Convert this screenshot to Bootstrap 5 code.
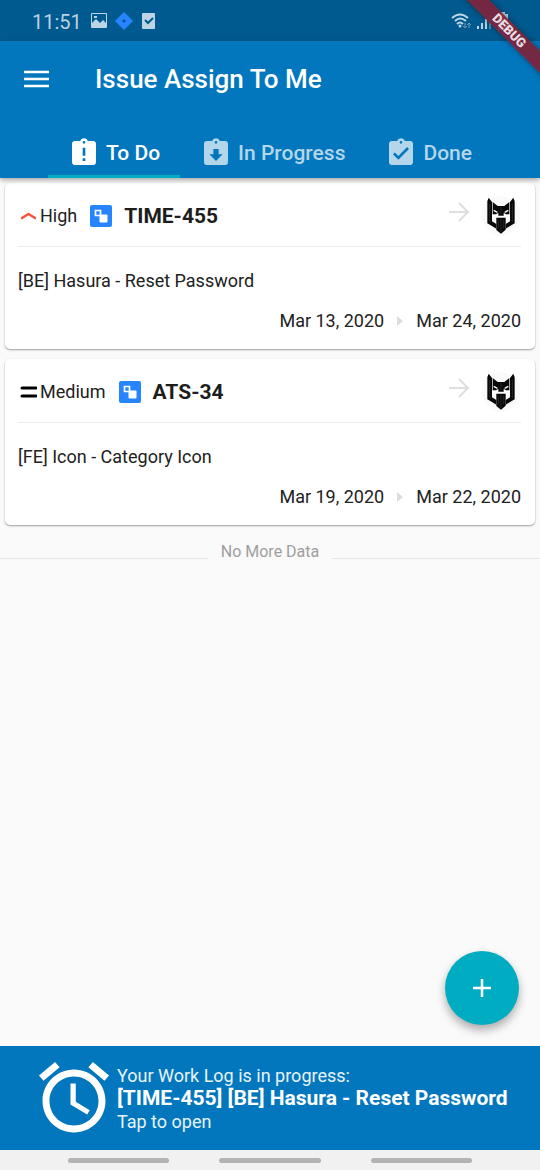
<!DOCTYPE html>
<html lang="en">
<head>
<meta charset="utf-8">
<meta name="viewport" content="width=device-width, initial-scale=1">
<title>Issue Assign To Me</title>
<link href="https://cdn.jsdelivr.net/npm/bootstrap@5.3.0/dist/css/bootstrap.min.css" rel="stylesheet">
<style>
  body { font-family: Roboto, "Noto Sans", sans-serif; font-size: 18px; line-height: 24px; color: #212121; background: #fafafa; }
  svg { display: block; flex-shrink: 0; }
  .screen { overflow-x: hidden; }
  .status-bar { height: 41px; background: #005a8f; color: #b9d2e2; font-size: 20px; padding: 2px 32px 0; }
  .status-icons { margin-left: 6px; }
  .top-bar { background: #0277bd; box-shadow: 0 2px 5px rgba(0,0,0,.35); z-index: 2; }
  .title-row { height: 76px; padding-left: 24px; gap: 46px; }
  .title-row h1 { font-size: 26px; line-height: 32px; font-weight: 500; }
  .menu-btn { border: 0; background: none; padding: 0; color: #fff; }
  .issue-tabs { height: 61px; }
  .issue-tabs .nav-link { color: #b3d6eb; font-size: 21px; font-weight: 500; padding: 14px 20px 0; gap: 6px; border-bottom: 3px solid transparent; }
  .issue-tabs .nav-link.active { color: #fff; border-color: #00acc1; }
  .debug-ribbon { top: 23px; right: -49px; width: 160px; height: 16px; line-height: 16px; transform: rotate(45deg); background: rgba(125,35,58,.92); color: #e9dde1; font-size: 13px; font-weight: 900; text-align: center; box-shadow: 0 0 6px rgba(0,0,0,.4); z-index: 5; }
  .issue-list { padding: 5px; gap: 10px; }
  .issue-card { border: 0; border-radius: 5px; padding: 0 14px 16px 13px; box-shadow: 0 1px 2px rgba(0,0,0,.38); }
  .issue-head { height: 64px; padding-top: 2px; border-bottom: 1px solid #ececec; }
  .issue-head h2 { font-size: 21px; line-height: 24px; font-weight: 700; margin: 0 0 0 12px; color: #1d1d1d; }
  .priority { gap: 3px; margin: 0 13px 0 2px; }
  .avatar-pic { margin-left: 11px; }
  .issue-text { margin: 22px 0 16px; }
  .issue-dates { gap: 12px; }
  .list-end { color: #9e9e9e; font-size: 16px; gap: 13px; margin-top: 10px; }
  .list-end hr { margin: 12px 0 0; border-color: #bdbdbd; opacity: .35; }
  .add-btn { width: 74px; height: 74px; right: 21px; bottom: 21px; border: 0; background: #00acc1; color: #fff; box-shadow: 0 5px 10px rgba(0,0,0,.32); }
  .work-log { background: #0277bd; color: #e8f4fb; text-decoration: none; padding: 14px 30px 14px 32px; gap: 1px; line-height: 23px; }
  .work-log:hover { color: #fff; }
  .work-log strong { font-size: 21px; color: #fff; }
  .gesture-bar { height: 20px; background: #f1f1f1; padding: 0 68px; gap: 50px; }
  .gesture-bar span { height: 5px; border-radius: 3px; background: #b3b3b3; }
</style>
</head>
<body>
<svg class="d-none" aria-hidden="true">
  <symbol id="subtask" viewBox="0 0 22 22">
    <rect width="22" height="22" rx="2" fill="#2684ff"/>
    <path d="M5.500 5.500h5v5h-5z" fill="none" stroke="#fff" stroke-width="1.700"/>
    <rect x="9.500" y="9.500" width="8" height="8" rx="1" fill="#fff"/>
  </symbol>
  <symbol id="arrow" viewBox="0 0 22 22">
    <path d="M1 11h19M11 2l9 9-9 9" fill="none" stroke="#dedede" stroke-width="2"/>
  </symbol>
  <symbol id="mask" viewBox="0 0 120 120">
    <circle cx="60" cy="60" r="59" fill="#fafafa"/>
    <g fill="#080808">
      <path d="M23 5l10 13v58l13 8v14L19 82V16z"/>
      <path d="M97 5L87 18v58l-13 8v14l27-16V16z"/>
      <path d="M35 18l15 12h20l15-12v37H75l-7-5v9H52v-9l-7 5H35z"/>
      <path d="M46 65h28v36L60 113 46 102z"/>
    </g>
    <path d="M46 20l14 9 14-9z" fill="#fafafa"/>
    <path d="M60 33v22M60 69v39M52 71v26M68 71v26M26 24v53M94 24v53" stroke="#444" stroke-width="1.500"/>
    <path d="M38 43l11 6M82 43l-11 6" stroke="#fafafa" stroke-width="4"/>
  </symbol>
</svg>

<div class="screen position-relative d-flex flex-column min-vh-100">
  <div class="debug-ribbon position-absolute">DEBUG</div>

  <div class="status-bar d-flex align-items-center">
    <span>11:51</span>
    <svg class="status-icons" width="70" height="20" viewBox="0 0 70 20" aria-hidden="true">
      <path fill="#bcd4e3" fill-rule="evenodd" d="M4 1h14q1 0 1 1v13q0 1-1 1H4q-1 0-1-1V2q0-1 1-1zm0 1v9l4-4 4 4 3-3 3 3V2zm2 2h3v2H6z"/>
      <path fill="#2684ff" d="M36 0l9 9-9 9-9-9z"/><path fill="#07509c" d="M36 7l2 2-2 2-2-2z"/>
      <path fill="#bcd4e3" d="M55 1h11q1 0 1 1v14q0 1-1 1H55q-1 0-1-1V2q0-1 1-1z"/>
      <path d="M57 8l3 3 5-5" fill="none" stroke="#005a8f" stroke-width="2"/>
    </svg>
    <svg class="ms-auto" width="58" height="24" viewBox="0 0 58 24" aria-hidden="true">
      <g fill="none" stroke="#bcd4e3" stroke-width="2"><path d="M2 8q8-7 16 0M5 11q5-5 11 0M7 14q3-3 6 0"/></g>
      <circle cx="10" cy="16" r="1.500" fill="#bcd4e3"/>
      <path d="M15 13v5m-2-2l2 2 2-2M19 18v-5m-2 2l2-2 2 2" fill="none" stroke="#6b9cbc"/>
      <path d="M28 16v3M32 13v6M36 9v10" stroke="#bcd4e3" stroke-width="2"/><path d="M40 5v14" stroke="#5088ad" stroke-width="2"/>
      <path d="M48 4h3V2h4v2h3v16H48z" fill="#bcd4e3"/>
    </svg>
  </div>

  <header class="top-bar position-relative">
    <div class="title-row d-flex align-items-center">
      <button class="menu-btn" type="button" aria-label="Open menu">
        <svg width="25" height="18" viewBox="0 0 25 18"><path d="M0 2h25M0 9h25M0 16h25" stroke="currentColor" stroke-width="2.500"/></svg>
      </button>
      <h1 class="mb-0 text-white">Issue Assign To Me</h1>
    </div>
    <nav class="issue-tabs d-flex justify-content-center">
      <a class="nav-link active d-flex align-items-center" href="#todo" aria-current="page">
        <svg width="32" height="32" viewBox="0 0 24 24" fill="currentColor"><path d="M19 3h-4.180C14.400 1.840 13.300 1 12 1c-1.300 0-2.400.840-2.820 2H5c-1.100 0-2 .900-2 2v14c0 1.100.900 2 2 2h14c1.100 0 2-.900 2-2V5c0-1.100-.900-2-2-2zm-6 15h-2v-2h2v2zm0-4h-2V8h2v6zm-1-9c-.550 0-1-.450-1-1s.450-1 1-1 1 .450 1 1-.450 1-1 1z"/></svg>
        To Do
      </a>
      <a class="nav-link d-flex align-items-center" href="#progress">
        <svg width="32" height="32" viewBox="0 0 24 24" fill="currentColor"><path d="M19 3h-4.180C14.400 1.840 13.300 1 12 1c-1.300 0-2.400.840-2.820 2H5c-1.100 0-2 .900-2 2v14c0 1.100.900 2 2 2h14c1.100 0 2-.900 2-2V5c0-1.100-.900-2-2-2zm-7 0c.550 0 1 .450 1 1s-.450 1-1 1-1-.450-1-1 .450-1 1-1zm0 15l-5-5h3V9h4v4h3l-5 5z"/></svg>
        In Progress
      </a>
      <a class="nav-link d-flex align-items-center" href="#done">
        <svg width="32" height="32" viewBox="0 0 24 24" fill="currentColor"><path d="M19 3h-4.180C14.400 1.840 13.300 1 12 1c-1.300 0-2.400.840-2.820 2H5c-1.100 0-2 .900-2 2v14c0 1.100.900 2 2 2h14c1.100 0 2-.900 2-2V5c0-1.100-.900-2-2-2zm-7 0c.550 0 1 .450 1 1s-.450 1-1 1-1-.450-1-1 .450-1 1-1zm-2 14l-4-4 1.410-1.410L10 14.170l6.590-6.590L18 9l-8 8z"/></svg>
        Done
      </a>
    </nav>
  </header>

  <main class="flex-grow-1 position-relative">
    <div class="issue-list d-flex flex-column">
      <article class="card issue-card">
        <div class="issue-head d-flex align-items-center">
          <span class="priority d-flex align-items-center">
            <svg width="17" height="10" viewBox="0 0 17 10"><path d="M2 7l6.500-4L15 7" fill="none" stroke="#f4533a" stroke-width="2.500" stroke-linecap="round" stroke-linejoin="round"/></svg>
            High
          </span>
          <svg width="22" height="22"><use href="#subtask"/></svg>
          <h2>TIME-455</h2>
          <svg class="ms-auto mb-2" width="22" height="22"><use href="#arrow"/></svg>
          <svg class="avatar-pic" width="40" height="40"><use href="#mask"/></svg>
        </div>
        <p class="issue-text">[BE] Hasura - Reset Password</p>
        <div class="issue-dates d-flex justify-content-end align-items-center">
          <span>Mar 13, 2020</span>
          <svg width="8" height="12" viewBox="0 0 8 12"><path d="M1 1l6 5-6 5z" fill="#dcdcdc"/></svg>
          <span>Mar 24, 2020</span>
        </div>
      </article>

      <article class="card issue-card">
        <div class="issue-head d-flex align-items-center">
          <span class="priority d-flex align-items-center">
            <svg width="17" height="14" viewBox="0 0 17 14"><path d="M2 3h14M2 11h14" stroke="#000" stroke-width="3" stroke-linecap="round"/></svg>
            Medium
          </span>
          <svg width="22" height="22"><use href="#subtask"/></svg>
          <h2>ATS-34</h2>
          <svg class="ms-auto mb-2" width="22" height="22"><use href="#arrow"/></svg>
          <svg class="avatar-pic" width="40" height="40"><use href="#mask"/></svg>
        </div>
        <p class="issue-text">[FE] Icon - Category Icon</p>
        <div class="issue-dates d-flex justify-content-end align-items-center">
          <span>Mar 19, 2020</span>
          <svg width="8" height="12" viewBox="0 0 8 12"><path d="M1 1l6 5-6 5z" fill="#dcdcdc"/></svg>
          <span>Mar 22, 2020</span>
        </div>
      </article>
    </div>

    <div class="list-end d-flex align-items-center">
      <hr class="flex-grow-1"><span>No More Data</span><hr class="flex-grow-1">
    </div>

    <button class="add-btn rounded-circle position-absolute d-flex align-items-center justify-content-center" type="button" aria-label="Add">
      <svg width="18" height="18" viewBox="0 0 18 18"><path d="M9 0v18M0 9h18" stroke="currentColor" stroke-width="2.500"/></svg>
    </button>
  </main>

  <footer>
    <a class="work-log d-flex align-items-center" href="#worklog">
      <svg width="84" height="76" viewBox="0 1.300 24 21.700" fill="#fff"><path d="M22 5.720l-4.600-3.860-1.290 1.530 4.600 3.860L22 5.720zM7.880 3.390L6.600 1.860 2 5.710l1.290 1.530 4.590-3.850zM12.500 8H11v6l4.750 2.850.750-1.230-4-2.370V8zM12 4c-4.970 0-9 4.030-9 9s4.020 9 9 9c4.970 0 9-4.030 9-9s-4.030-9-9-9zm0 16c-3.870 0-7-3.130-7-7s3.130-7 7-7 7 3.130 7 7-3.130 7-7 7z"/></svg>
      <span class="d-flex flex-column">
        <span>Your Work Log is in progress:</span>
        <strong>[TIME-455] [BE] Hasura - Reset Password</strong>
        <span>Tap to open</span>
      </span>
    </a>
    <div class="gesture-bar d-flex align-items-center">
      <span class="flex-fill"></span><span class="flex-fill"></span><span class="flex-fill"></span>
    </div>
  </footer>
</div>
<script src="https://cdn.jsdelivr.net/npm/bootstrap@5.3.0/dist/js/bootstrap.bundle.min.js"></script>
</body>
</html>
